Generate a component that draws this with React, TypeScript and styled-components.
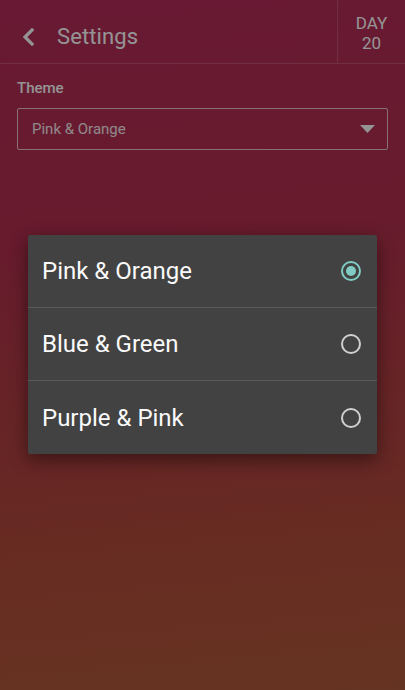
import React, { useState } from "react";
import styled, { createGlobalStyle } from "styled-components";

const GlobalStyle = createGlobalStyle`
  html, body {
    margin: 0;
    padding: 0;
  }
  body {
    font-family: Roboto, "Noto Sans", sans-serif;
  }
`;

const themes = ["Pink & Orange", "Blue & Green", "Purple & Pink"];

function App() {
  const [selected, setSelected] = useState(0);

  return (
    <Screen>
      <GlobalStyle />
      <Header>
        <TitleArea>
          <BackIcon width="14" height="18" viewBox="0 0 14 18">
            <path d="M11 2 L4 9 L11 16" fill="none" stroke="#fff" strokeWidth="3.2" strokeLinecap="square" />
          </BackIcon>
          <Title>Settings</Title>
        </TitleArea>
        <DayBox>
          <span>DAY</span>
          <span>20</span>
        </DayBox>
      </Header>

      <Content>
        <Label>Theme</Label>
        <Select>
          <SelectText>{themes[selected]}</SelectText>
          <svg width="15" height="8" viewBox="0 0 15 8">
            <path d="M0 0 L15 0 L7.5 8 Z" fill="#fff" />
          </svg>
        </Select>
      </Content>

      <Scrim>
        <Dialog>
          {themes.map((t, i) => (
            <Option key={t} $last={i === themes.length - 1} onClick={() => setSelected(i)}>
              <OptionText>{t}</OptionText>
              <Radio $checked={i === selected} />
            </Option>
          ))}
        </Dialog>
      </Scrim>
    </Screen>
  );
}

export default App;

const Screen = styled.div`
  position: relative;
  width: 405px;
  height: 690px;
  overflow: hidden;
  background: linear-gradient(175deg, #b52c5a 0%, #b2304d 35%, #b24a3c 75%, #b05a3c 100%);
  color: #fff;
`;

const Header = styled.div`
  display: flex;
  height: 64px;
  border-bottom: 1px solid rgba(255, 255, 255, 0.18);
  box-sizing: border-box;
`;

const TitleArea = styled.div`
  flex: 1;
  display: flex;
  align-items: center;
  padding: 10px 0 0 21px;
  gap: 22px;
`;

const BackIcon = styled.svg`
  display: block;
  margin-top: 1px;
`;

const Title = styled.div`
  font-size: 22px;
  letter-spacing: 0.1px;
`;

const DayBox = styled.div`
  width: 67px;
  border-left: 1px solid rgba(255, 255, 255, 0.18);
  display: flex;
  flex-direction: column;
  align-items: center;
  justify-content: center;
  font-size: 17px;
  line-height: 20px;
  padding-top: 2px;
`;

const Content = styled.div`
  padding: 15px 17px 0;
`;

const Label = styled.div`
  font-size: 15px;
  font-weight: 500;
  line-height: 18px;
  margin-bottom: 11px;
`;

const Select = styled.div`
  height: 42px;
  box-sizing: border-box;
  border: 1.5px solid rgba(255, 255, 255, 0.7);
  border-radius: 2px;
  display: flex;
  align-items: center;
  justify-content: space-between;
  padding: 0 12px 0 14px;
`;

const SelectText = styled.span`
  font-size: 15px;
  opacity: 0.9;
`;

const Scrim = styled.div`
  position: absolute;
  inset: 0;
  background: rgba(0, 0, 0, 0.42);
  padding-top: 235px;
  display: flex;
  justify-content: center;
  align-items: flex-start;
`;

const Dialog = styled.div`
  width: 349px;
  background: #424242;
  border-radius: 2px;
  box-shadow: 0 6px 18px rgba(0, 0, 0, 0.45);
`;

const Option = styled.div<{ $last?: boolean }>`
  height: 73px;
  box-sizing: border-box;
  display: flex;
  align-items: center;
  justify-content: space-between;
  padding: 0 16px 0 14px;
  border-bottom: ${(p) => (p.$last ? "none" : "1px solid #5a5a5a")};
  cursor: pointer;
`;

const OptionText = styled.span`
  font-size: 24px;
  color: #fafafa;
`;

const Radio = styled.span<{ $checked?: boolean }>`
  width: 20px;
  height: 20px;
  box-sizing: border-box;
  border-radius: 50%;
  border: 2px solid ${(p) => (p.$checked ? "#80cbc4" : "#d0d0d0")};
  display: flex;
  align-items: center;
  justify-content: center;

  &::after {
    content: "";
    width: 10px;
    height: 10px;
    border-radius: 50%;
    background: #80cbc4;
    display: ${(p) => (p.$checked ? "block" : "none")};
  }
`;
